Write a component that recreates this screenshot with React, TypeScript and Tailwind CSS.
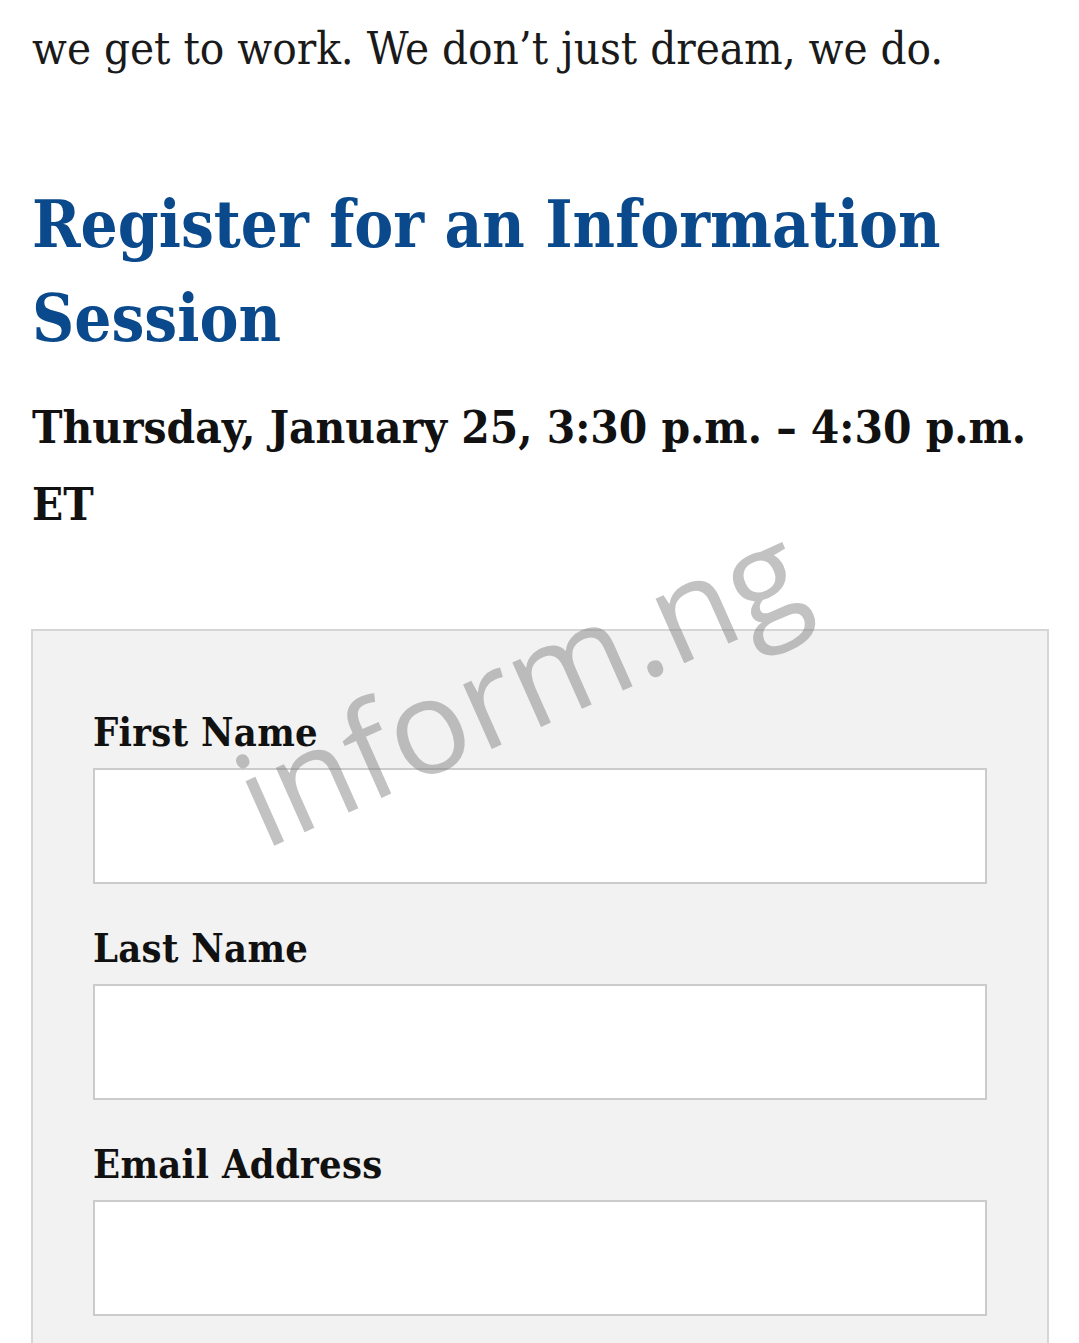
import React from "react";

const serif = { fontFamily: '"DejaVu Serif Condensed", "DejaVu Serif", serif' };

function Field({ label }: { label: string }) {
  return (
    <div className="flex flex-col">
      <label className="text-[39.5px] leading-[48px] font-bold text-[#111] tracking-[0.3px]" style={serif}>
        {label}
      </label>
      <div className="mt-[12px] h-[116px] bg-white border-2 border-[#cbcbcb]" />
    </div>
  );
}

export default function App() {
  return (
    <div className="relative w-[1079px] h-[1343px] overflow-hidden bg-white" style={serif}>
      <div className="pl-[32px] pr-[20px]">
        <p className="pt-[21px] text-[45.3px] leading-[56px] text-[#1a1a1a] whitespace-nowrap">
          we get to work. We don’t just dream, we do.
        </p>
        <h2 className="mt-[100px] text-[65px] leading-[94px] font-bold text-[#0a4a8c]">
          Register for an Information Session
        </h2>
        <p className="mt-[24px] text-[45.5px] leading-[77px] font-bold text-[#111]">
          Thursday, January 25, 3:30 p.m. – 4:30 p.m. ET
        </p>
      </div>
      <div className="ml-[31px] mt-[86px] w-[1018px] bg-[#f2f2f2] border-2 border-[#d6d6d6] px-[60px] pt-[77px] pb-[60px] flex flex-col gap-[40px]">
        <Field label="First Name" />
        <Field label="Last Name" />
        <Field label="Email Address" />
      </div>
      <div
        className="absolute left-[270px] top-[732px] text-[132px] leading-none text-[#7a7a7a] opacity-45 origin-bottom-left -rotate-[24deg] pointer-events-none select-none"
        style={{ fontFamily: '"Open Sans", sans-serif' }}
      >
        inform.ng
      </div>
    </div>
  );
}
